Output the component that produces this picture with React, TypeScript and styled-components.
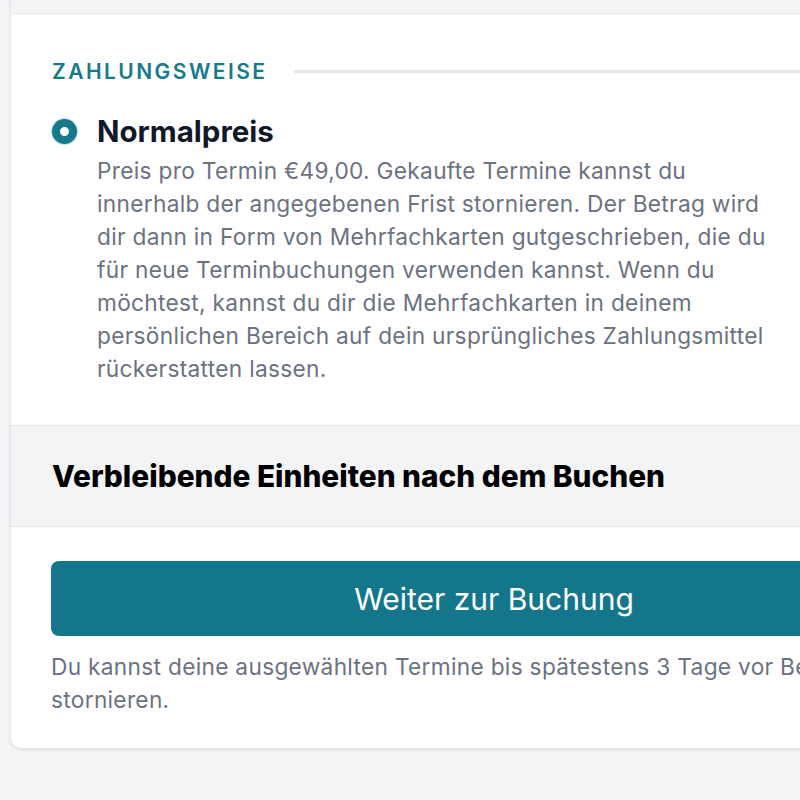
import React from "react";
import styled, { createGlobalStyle } from "styled-components";

const Global = createGlobalStyle`
  html, body {
    margin: 0;
    padding: 0;
    background: #f3f4f6;
    font-family: Inter, "Noto Sans", "Liberation Sans", sans-serif;
    -webkit-font-smoothing: antialiased;
  }
  * { box-sizing: border-box; }
`;

const Page = styled.div`
  padding: 0 0 51px 10px;
  overflow: hidden;
  width: 800px;
`;

const Card = styled.div`
  width: 968px;
  background: #ffffff;
  border: 1px solid #e5e7eb;
  border-top: none;
  border-radius: 0 0 12px 12px;
  box-shadow: 0 1px 3px rgba(15, 23, 42, 0.08);
  overflow: hidden;
`;

const Section = styled.div<{ $tone?: "muted" | "plain" }>`
  background: ${(p) => (p.$tone === "muted" ? "#f3f4f6" : "#ffffff")};
  border-bottom: 1px solid #e5e7eb;
  &:last-child { border-bottom: none; }
`;

const TopStrip = styled(Section)`
  height: 14px;
`;

const PaymentSection = styled(Section)`
  padding: 43px 40px 40px 41px;
`;

const LegendRow = styled.div`
  display: flex;
  align-items: center;
  gap: 27px;
  height: 28px;
`;

const Legend = styled.span`
  font-size: 21px;
  font-weight: 600;
  letter-spacing: 2.45px;
  color: #167a8c;
  text-transform: uppercase;
  white-space: nowrap;
`;

const LegendRule = styled.div`
  flex: 1;
  height: 3px;
  background: #e5e7eb;
`;

const Option = styled.label`
  display: grid;
  grid-template-columns: 25px 1fr;
  column-gap: 20px;
  margin-top: 28px;
`;

const Radio = styled.span`
  width: 25px;
  height: 25px;
  margin-top: 6px;
  border-radius: 50%;
  border: 8px solid #167a8c;
  background: #ffffff;
  box-shadow: 0 0 0 1px rgba(22, 122, 140, 0.25);
`;

const OptionText = styled.div`
  display: flex;
  flex-direction: column;
  gap: 5px;
`;

const OptionTitle = styled.span`
  font-size: 29.5px;
  line-height: 36px;
  font-weight: 700;
  color: #111827;
`;

const OptionBody = styled.p`
  margin: 0;
  max-width: 684px;
  font-size: 22.7px;
  line-height: 33px;
  letter-spacing: 0.3px;
  color: #6b7280;
`;

const SummarySection = styled(Section)`
  padding: 32px 40px 32px 41px;
`;

const SummaryTitle = styled.h2`
  margin: 0;
  font-size: 29.8px;
  line-height: 36px;
  font-weight: 800;
  color: #000000;
`;

const ActionSection = styled(Section)`
  padding: 34px 40px 32px 40px;
`;

const PrimaryButton = styled.button`
  display: block;
  width: 100%;
  height: 75px;
  border: none;
  border-radius: 8px;
  background: #13768a;
  color: #ffffff;
  font-family: inherit;
  font-size: 30px;
  font-weight: 400;
  cursor: pointer;
`;

const Note = styled.p`
  margin: 14px 0 0;
  font-size: 22.7px;
  line-height: 33px;
  letter-spacing: 0.3px;
  color: #6b7280;
`;

export default function App() {
  return (
    <>
      <Global />
      <Page>
        <Card>
          <TopStrip $tone="muted" />
          <PaymentSection>
            <LegendRow>
              <Legend>Zahlungsweise</Legend>
              <LegendRule />
            </LegendRow>
            <Option>
              <Radio />
              <OptionText>
                <OptionTitle>Normalpreis</OptionTitle>
                <OptionBody>
                  Preis pro Termin €49,00. Gekaufte Termine kannst du innerhalb der
                  angegebenen Frist stornieren. Der Betrag wird dir dann in Form von
                  Mehrfachkarten gutgeschrieben, die du für neue Terminbuchungen
                  verwenden kannst. Wenn du möchtest, kannst du dir die Mehrfachkarten
                  in deinem persönlichen Bereich auf dein ursprüngliches
                  Zahlungsmittel rückerstatten lassen.
                </OptionBody>
              </OptionText>
            </Option>
          </PaymentSection>
          <SummarySection $tone="muted">
            <SummaryTitle>Verbleibende Einheiten nach dem Buchen</SummaryTitle>
          </SummarySection>
          <ActionSection>
            <PrimaryButton>Weiter zur Buchung</PrimaryButton>
            <Note>
              Du kannst deine ausgewählten Termine bis spätestens 3 Tage vor Beginn
              stornieren.
            </Note>
          </ActionSection>
        </Card>
      </Page>
    </>
  );
}
